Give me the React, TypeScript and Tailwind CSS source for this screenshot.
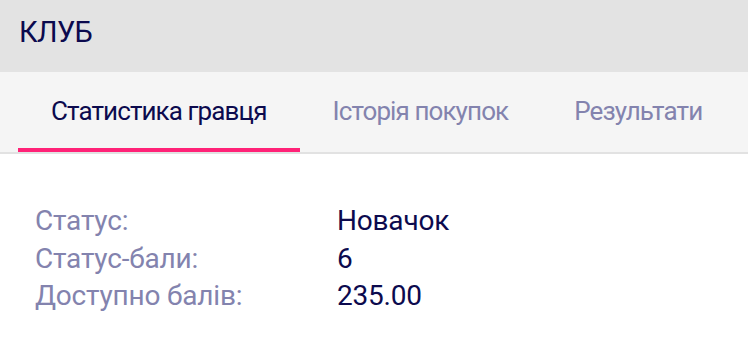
const rows = [
  { label: 'Статус:', value: 'Новачок' },
  { label: 'Статус-бали:', value: '6' },
  { label: 'Доступно балів:', value: '235.00' },
];

const tabs = ['Статистика гравця', 'Історія покупок', 'Результати'];

export default function App() {
  return (
    <div className="w-[748px] h-[352px] bg-white overflow-hidden font-['Roboto',sans-serif]">
      <div className="h-[72px] bg-[#e3e3e3] flex items-center px-[19px]">
        <h1 className="text-[29px] leading-none tracking-[-0.6px] text-[#0c0a4e] mt-[-8px]">КЛУБ</h1>
      </div>

      <div className="h-[82px] bg-[#f5f5f5] border-b-2 border-[#e2e2e2] flex pl-[18px]">
        {tabs.map((t, i) => (
          <div
            key={t}
            className={
              'h-full flex items-center px-[33px] text-[26px] leading-none tracking-[-0.9px] whitespace-nowrap border-b-4 ' +
              (i === 0 ? 'text-[#0c0a4e] border-[#ff2277]' : 'text-[#8383ae] border-transparent')
            }
          >
            <span className="mt-[1px]">{t}</span>
          </div>
        ))}
      </div>

      <div className="pt-[48px] pl-[35px] grid grid-cols-[302px_1fr] text-[28px] leading-[37.5px] tracking-[-0.2px]">
        {rows.map((r) => (
          <div key={r.label} className="contents">
            <div className="text-[#8383ae]">{r.label}</div>
            <div className="text-[#0c0a4e]">{r.value}</div>
          </div>
        ))}
      </div>
    </div>
  );
}
